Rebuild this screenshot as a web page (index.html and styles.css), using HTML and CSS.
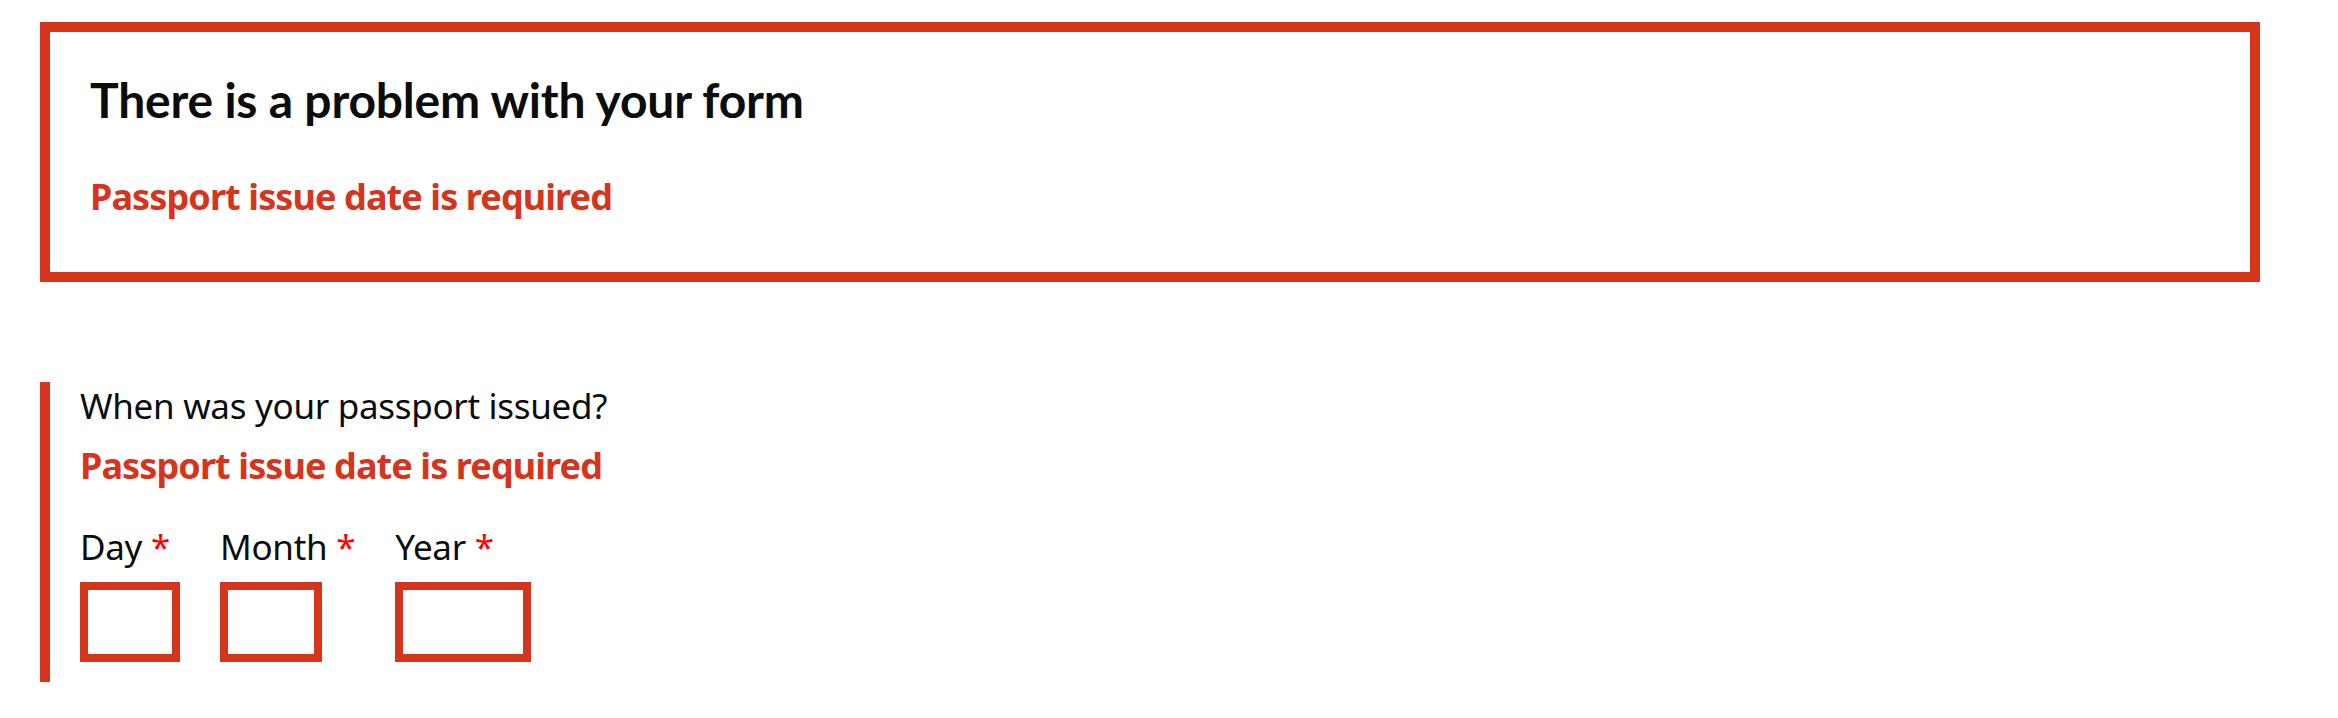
FILE: index.html
```html
<!DOCTYPE html>
<html lang="en">
<head>
<meta charset="utf-8">
<title>Passport issue date</title>
<link rel="stylesheet" href="styles.css">
</head>
<body>
<main class="page">
  <div class="error-summary" role="alert">
    <h2 class="error-summary__title">There is a problem with your form</h2>
    <ul class="error-summary__list">
      <li><a class="error-summary__link" href="#passport-issued-day">Passport issue date is required</a></li>
    </ul>
  </div>

  <div class="form-group form-group--error">
    <fieldset class="fieldset">
      <legend class="fieldset__legend">When was your passport issued?</legend>
      <p class="error-message">Passport issue date is required</p>
      <div class="date-input">
        <div class="date-input__item">
          <label class="date-input__label" for="passport-issued-day">Day <span class="required">*</span></label>
          <input class="date-input__input date-input__input--day" id="passport-issued-day" type="text">
        </div>
        <div class="date-input__item">
          <label class="date-input__label" for="passport-issued-month">Month <span class="required">*</span></label>
          <input class="date-input__input date-input__input--month" id="passport-issued-month" type="text">
        </div>
        <div class="date-input__item">
          <label class="date-input__label" for="passport-issued-year">Year <span class="required">*</span></label>
          <input class="date-input__input date-input__input--year" id="passport-issued-year" type="text">
        </div>
      </div>
    </fieldset>
  </div>
</main>
</body>
</html>
```

FILE: styles.css
```css
* {
  box-sizing: border-box;
}

html,
body {
  margin: 0;
  padding: 0;
  background: #ffffff;
}

body {
  font-family: "Noto Sans", "Open Sans", Arial, sans-serif;
  color: #0b0c0c;
}

.page {
  padding: 22px 0 0 40px;
}

.error-summary {
  width: 2220px;
  border: 10px solid #d4351c;
  padding: 40px 40px 53px 40px;
}

.error-summary__title {
  margin: 0 0 47px 0;
  font-family: Lato, "Noto Sans", Arial, sans-serif;
  font-size: 48px;
  line-height: 56px;
  font-weight: 700;
  letter-spacing: -0.2px;
  color: #0b0c0c;
}

.error-summary__list {
  list-style: none;
  margin: 0;
  padding: 0;
}

.error-summary__link {
  display: block;
  font-size: 36px;
  line-height: 44px;
  font-weight: 700;
  letter-spacing: -0.9px;
  color: #d4351c;
  text-decoration: none;
}

.form-group--error {
  margin-top: 100px;
  border-left: 10px solid #d4351c;
  padding: 0 0 20px 30px;
}

.fieldset {
  margin: 0;
  padding: 0;
  border: 0;
  min-width: 0;
}

.fieldset__legend {
  padding: 0;
  font-size: 35px;
  line-height: 48px;
  font-weight: 400;
  letter-spacing: -0.3px;
}

.error-message {
  margin: 14px 0 0 0;
  font-size: 36px;
  line-height: 44px;
  font-weight: 700;
  letter-spacing: -0.9px;
  color: #d4351c;
}

.date-input {
  display: flex;
  align-items: flex-start;
  margin-top: 37px;
}

.date-input__item {
  display: flex;
  flex-direction: column;
  align-items: flex-start;
  margin-right: 40px;
}

.date-input__label {
  font-size: 35px;
  line-height: 44px;
  white-space: nowrap;
  letter-spacing: -0.3px;
}

.required {
  color: #ff0000;
}

.date-input__input {
  display: block;
  margin-top: 13px;
  height: 80px;
  border: 8px solid #d4351c;
  border-radius: 0;
  background: #ffffff;
  font-family: inherit;
  font-size: 35px;
  padding: 0 8px;
  outline: none;
}

.date-input__input--day {
  width: 100px;
}

.date-input__input--month {
  width: 102px;
}

.date-input__input--year {
  width: 136px;
}
```
